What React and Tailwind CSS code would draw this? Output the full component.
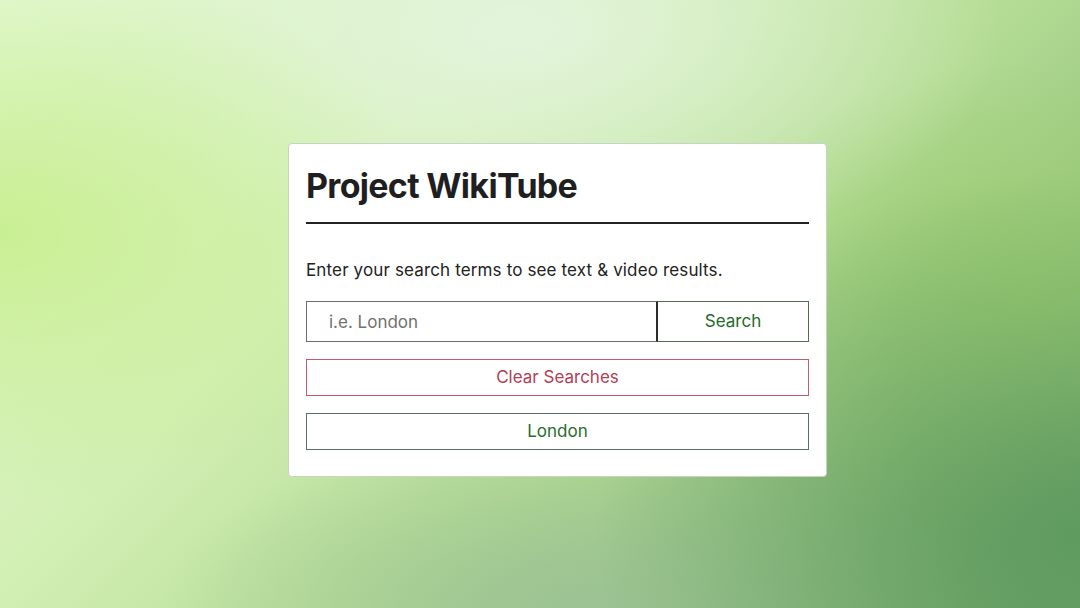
import React from 'react';

const App = () => {
  return (
    <div
      className="w-[1080px] h-[608px] flex items-start justify-start pl-[288px] pt-[143px] bg-[radial-gradient(ellipse_45%_60%_at_100%_88%,#5f9a5f_0%,transparent_100%),radial-gradient(ellipse_40%_45%_at_0%_38%,#c9ef93_0%,transparent_100%),radial-gradient(ellipse_45%_40%_at_48%_5%,#e3f4dc_0%,transparent_100%),radial-gradient(ellipse_30%_40%_at_95%_50%,#9ecf72_0%,transparent_100%),radial-gradient(ellipse_40%_30%_at_55%_100%,#9cc294_0%,transparent_100%),linear-gradient(135deg,#e3f8d2_0%,#d2efb4_35%,#b4dc94_60%,#74a868_100%)]"
      style={{ fontFamily: 'Inter, "Noto Sans", sans-serif' }}
    >
      <div className="w-[539px] h-[334px] bg-white rounded-[4px] border border-[#c9d3c4] px-[17px] pt-[22px]">
        <h1 className="text-[34px] leading-[40px] font-bold text-[#1f1f22] tracking-[-0.7px]">
          Project WikiTube
        </h1>
        <div className="mt-[16px] h-[2px] bg-[#222]"></div>

        <p className="mt-[36px] text-[17px] leading-[21px] text-[#222] tracking-[0.14px]">
          Enter your search terms to see text &amp; video results.
        </p>

        <div className="mt-[20px] flex h-[41px]">
          <input
            type="text"
            placeholder="i.e. London"
            className="flex-1 h-full border border-[#66706f] border-r-[2px] border-r-[#2c2c2c] pl-[22px] text-[17px] text-[#333] placeholder:text-[#707070] outline-none"
          />
          <button className="w-[151px] h-full border border-l-0 border-[#4f6b52] text-[17px] text-[#256b2a]">
            Search
          </button>
        </div>

        <button className="mt-[17px] w-full h-[37px] border border-[#c75a6c] text-[17px] text-[#b43d55]">
          Clear Searches
        </button>

        <button className="mt-[17px] w-full h-[37px] border border-[#58706a] text-[17px] text-[#256b2a]">
          London
        </button>
      </div>
    </div>
  );
};

export default App;
